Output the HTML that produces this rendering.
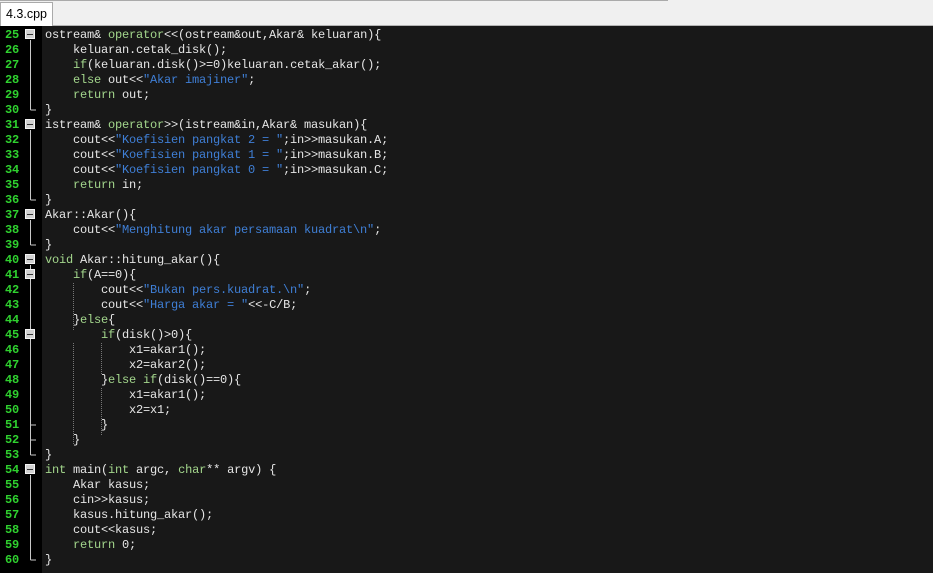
<!DOCTYPE html>
<html><head><meta charset="utf-8"><style>
*{margin:0;padding:0}
body{width:933px;height:573px;overflow:hidden;background:#f0f0f0;position:relative;font-family:"Liberation Mono",monospace}
#top{position:absolute;left:0;top:0;width:933px;height:25px;background:#f0f0f0;border-bottom:1px solid #b4b4b4}
#topline{position:absolute;left:0;top:0;width:668px;height:1px;background:#aaa}
#tab{position:absolute;left:0;top:2px;width:51px;height:23px;background:#fff;border:1px solid #aaa;border-bottom:none;font-family:"Liberation Sans",sans-serif;font-size:12.5px;line-height:22px;text-align:center;color:#000}
#code{position:absolute;left:0;top:26px;width:933px;height:547px;background:#181818}
#gut{position:absolute;left:0;top:26px;width:42px;height:547px;background:#000}
.l{position:absolute;left:45px;height:15px;font-size:12px;letter-spacing:-0.2px;line-height:15px;color:#e6e6e6;white-space:pre}
.n{position:absolute;left:5px;height:15px;font-size:12px;letter-spacing:-0.2px;line-height:15px;color:#2fd12f;font-weight:bold;white-space:pre}
.k{color:#a3d68c}.s{color:#3f7fd6}
</style></head><body>
<div id="top"></div><div id="topline"></div><div id="tab">4.3.cpp</div>
<div id="code"></div><div id="gut"></div>
<svg style="position:absolute;left:0;top:0" width="933" height="573">
<g stroke="#c8c8c8" stroke-width="1" fill="none">
<path d="M30.5 40V110M30.5 110H36"/>
<path d="M30.5 130V200M30.5 200H36"/>
<path d="M30.5 220V245M30.5 245H36"/>
<path d="M30.5 265V455M30.5 440H36M30.5 425H36M30.5 455H36"/>
<path d="M30.5 475V560M30.5 560H36"/>
</g>
<g fill="#d0d0d0" stroke="#f4f4f4">
<rect x="25.5" y="29.5" width="9" height="9"/>
<rect x="25.5" y="119.5" width="9" height="9"/>
<rect x="25.5" y="209.5" width="9" height="9"/>
<rect x="25.5" y="254.5" width="9" height="9"/>
<rect x="25.5" y="269.5" width="9" height="9"/>
<rect x="25.5" y="329.5" width="9" height="9"/>
<rect x="25.5" y="464.5" width="9" height="9"/>
</g>
<path d="M27 34.5H33M27 124.5H33M27 214.5H33M27 259.5H33M27 274.5H33M27 334.5H33M27 469.5H33" stroke="#333" stroke-width="1"/>
<g stroke="#777" stroke-dasharray="1 1"><path d="M73.5 283V330M73.5 343V445M101.5 343V375M101.5 388V435"/></g>
</svg>
<div class="n" style="top:28px">25</div><div class="l" style="top:28px">ostream&amp; <span class="k">operator</span>&lt;&lt;(ostream&amp;out,Akar&amp; keluaran){</div>
<div class="n" style="top:43px">26</div><div class="l" style="top:43px">    keluaran.cetak_disk();</div>
<div class="n" style="top:58px">27</div><div class="l" style="top:58px">    <span class="k">if</span>(keluaran.disk()&gt;=0)keluaran.cetak_akar();</div>
<div class="n" style="top:73px">28</div><div class="l" style="top:73px">    <span class="k">else</span> out&lt;&lt;<span class="s">"Akar imajiner"</span>;</div>
<div class="n" style="top:88px">29</div><div class="l" style="top:88px">    <span class="k">return</span> out;</div>
<div class="n" style="top:103px">30</div><div class="l" style="top:103px">}</div>
<div class="n" style="top:118px">31</div><div class="l" style="top:118px">istream&amp; <span class="k">operator</span>&gt;&gt;(istream&amp;in,Akar&amp; masukan){</div>
<div class="n" style="top:133px">32</div><div class="l" style="top:133px">    cout&lt;&lt;<span class="s">"Koefisien pangkat 2 = "</span>;in&gt;&gt;masukan.A;</div>
<div class="n" style="top:148px">33</div><div class="l" style="top:148px">    cout&lt;&lt;<span class="s">"Koefisien pangkat 1 = "</span>;in&gt;&gt;masukan.B;</div>
<div class="n" style="top:163px">34</div><div class="l" style="top:163px">    cout&lt;&lt;<span class="s">"Koefisien pangkat 0 = "</span>;in&gt;&gt;masukan.C;</div>
<div class="n" style="top:178px">35</div><div class="l" style="top:178px">    <span class="k">return</span> in;</div>
<div class="n" style="top:193px">36</div><div class="l" style="top:193px">}</div>
<div class="n" style="top:208px">37</div><div class="l" style="top:208px">Akar::Akar(){</div>
<div class="n" style="top:223px">38</div><div class="l" style="top:223px">    cout&lt;&lt;<span class="s">"Menghitung akar persamaan kuadrat\n"</span>;</div>
<div class="n" style="top:238px">39</div><div class="l" style="top:238px">}</div>
<div class="n" style="top:253px">40</div><div class="l" style="top:253px"><span class="k">void</span> Akar::hitung_akar(){</div>
<div class="n" style="top:268px">41</div><div class="l" style="top:268px">    <span class="k">if</span>(A==0){</div>
<div class="n" style="top:283px">42</div><div class="l" style="top:283px">        cout&lt;&lt;<span class="s">"Bukan pers.kuadrat.\n"</span>;</div>
<div class="n" style="top:298px">43</div><div class="l" style="top:298px">        cout&lt;&lt;<span class="s">"Harga akar = "</span>&lt;&lt;-C/B;</div>
<div class="n" style="top:313px">44</div><div class="l" style="top:313px">    }<span class="k">else</span>{</div>
<div class="n" style="top:328px">45</div><div class="l" style="top:328px">        <span class="k">if</span>(disk()&gt;0){</div>
<div class="n" style="top:343px">46</div><div class="l" style="top:343px">            x1=akar1();</div>
<div class="n" style="top:358px">47</div><div class="l" style="top:358px">            x2=akar2();</div>
<div class="n" style="top:373px">48</div><div class="l" style="top:373px">        }<span class="k">else if</span>(disk()==0){</div>
<div class="n" style="top:388px">49</div><div class="l" style="top:388px">            x1=akar1();</div>
<div class="n" style="top:403px">50</div><div class="l" style="top:403px">            x2=x1;</div>
<div class="n" style="top:418px">51</div><div class="l" style="top:418px">        }</div>
<div class="n" style="top:433px">52</div><div class="l" style="top:433px">    }</div>
<div class="n" style="top:448px">53</div><div class="l" style="top:448px">}</div>
<div class="n" style="top:463px">54</div><div class="l" style="top:463px"><span class="k">int</span> main(<span class="k">int</span> argc, <span class="k">char</span>** argv) {</div>
<div class="n" style="top:478px">55</div><div class="l" style="top:478px">    Akar kasus;</div>
<div class="n" style="top:493px">56</div><div class="l" style="top:493px">    cin&gt;&gt;kasus;</div>
<div class="n" style="top:508px">57</div><div class="l" style="top:508px">    kasus.hitung_akar();</div>
<div class="n" style="top:523px">58</div><div class="l" style="top:523px">    cout&lt;&lt;kasus;</div>
<div class="n" style="top:538px">59</div><div class="l" style="top:538px">    <span class="k">return</span> 0;</div>
<div class="n" style="top:553px">60</div><div class="l" style="top:553px">}</div>
</body></html>
